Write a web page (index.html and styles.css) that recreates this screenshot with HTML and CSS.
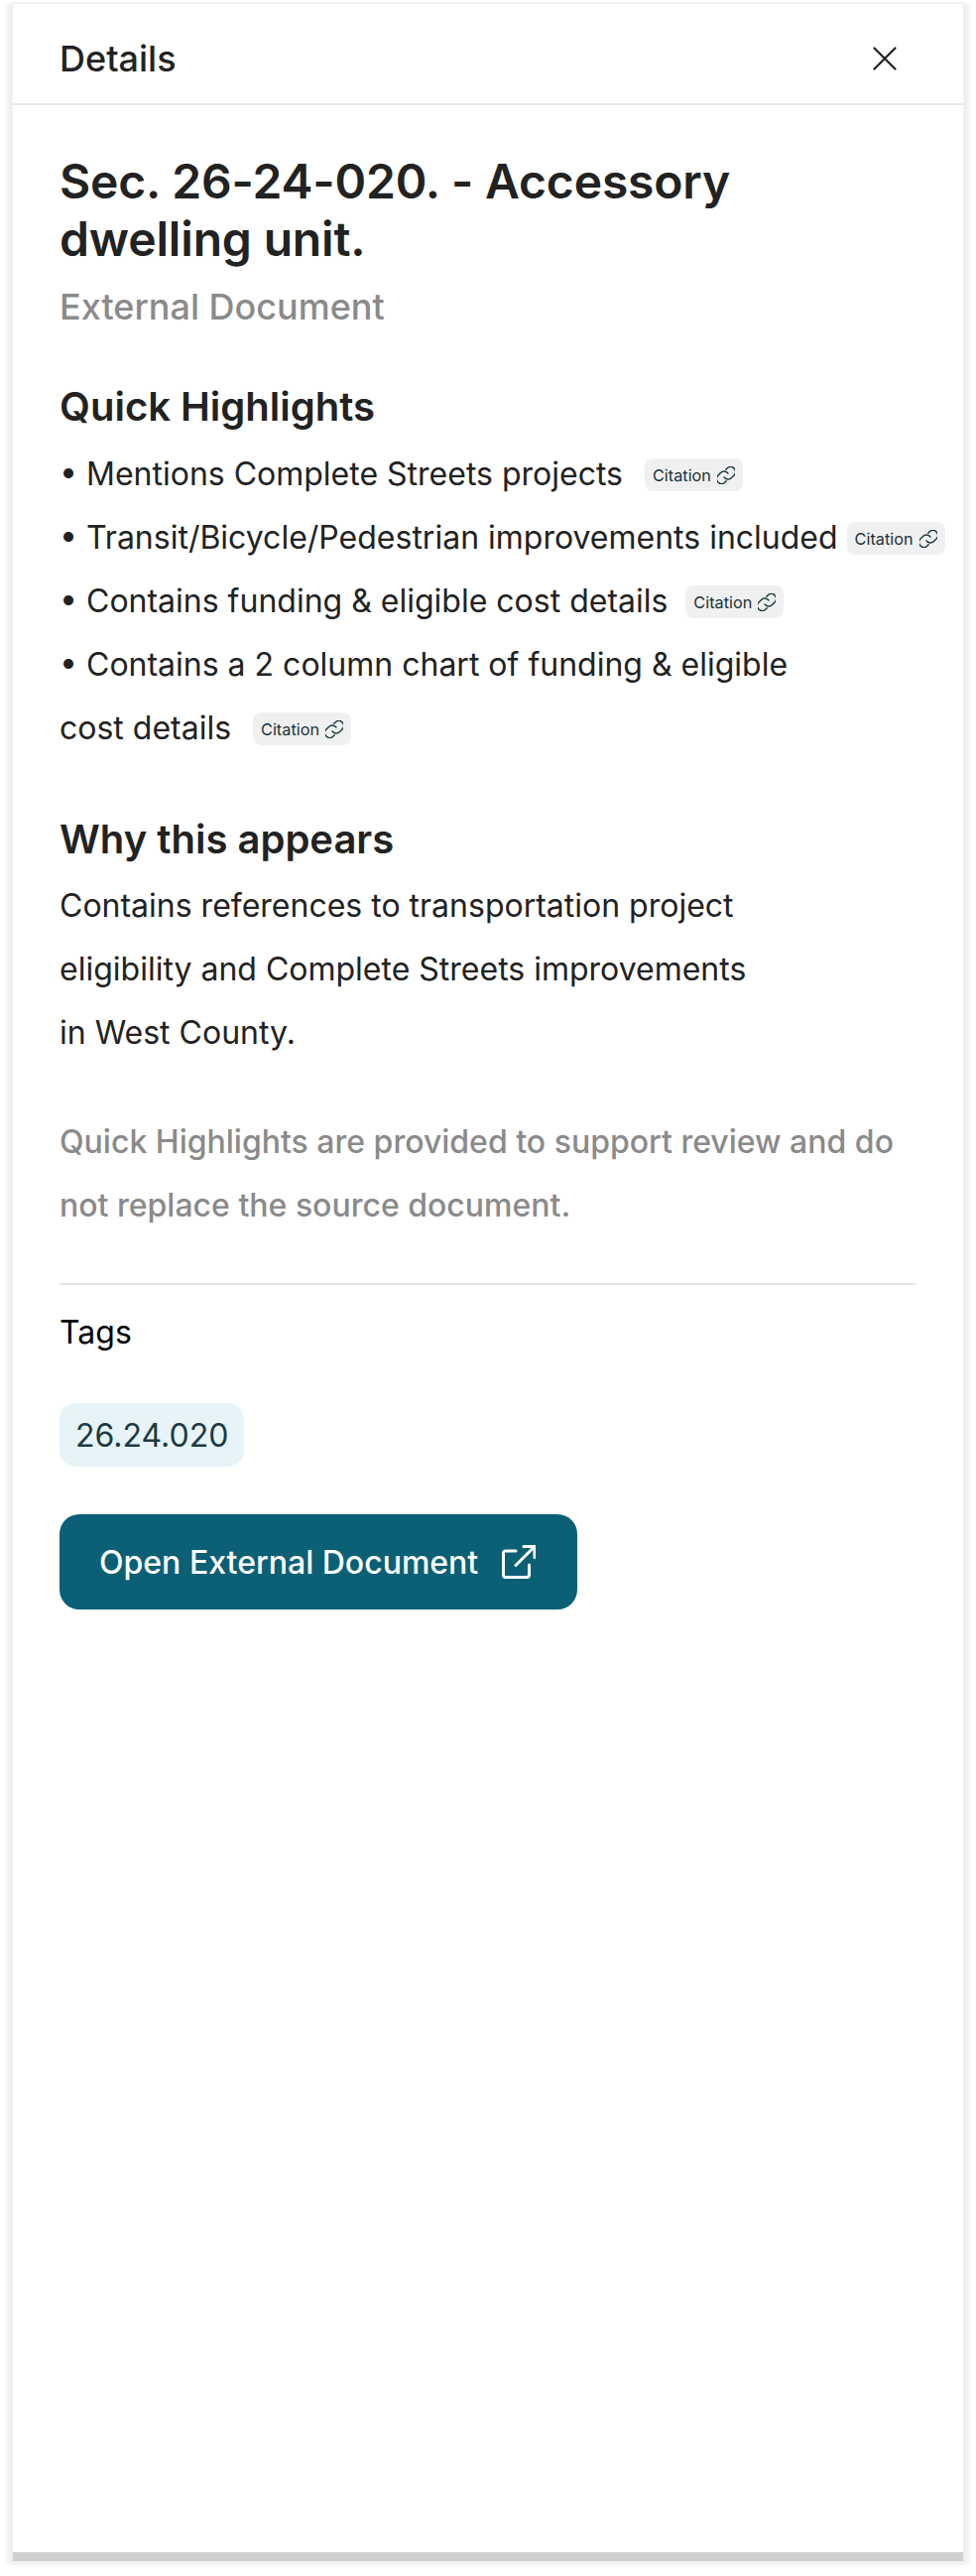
FILE: index.html
```html
<!DOCTYPE html>
<html lang="en">
<head>
<meta charset="utf-8">
<title>Details</title>
<link rel="stylesheet" href="styles.css">
</head>
<body>
<aside class="panel">
  <header class="panel-head">
    <span class="panel-title">Details</span>
    <svg class="close" viewBox="0 0 24 24" width="24" height="24" fill="none" stroke="#1f1f1f" stroke-width="2.2" stroke-linecap="round"><path d="M1.5 1.5 22.5 22.5M22.5 1.5 1.5 22.5"/></svg>
  </header>
  <div class="panel-body">
    <h1 class="doc-title">Sec. 26-24-020. - Accessory<br>dwelling unit.</h1>
    <p class="doc-type">External Document</p>

    <h2 class="section-title highlights">Quick Highlights</h2>
    <ul class="lines">
      <li>• Mentions Complete Streets projects<a class="cite cite-far"><span>Citation</span><svg viewBox="3 3 18 18" width="18" height="18" fill="none" stroke="currentColor" stroke-width="1.4" stroke-linecap="round" stroke-linejoin="round"><path d="M10 14a5 5 0 0 0 7.500.5l3-3a5 5 0 0 0-7-7l-1.700 1.700"/><path d="M14 10a5 5 0 0 0-7.500-.5l-3 3a5 5 0 0 0 7 7l1.700-1.700"/></svg></a></li>
      <li>• Transit/Bicycle/Pedestrian improvements included<a class="cite"><span>Citation</span><svg viewBox="3 3 18 18" width="18" height="18" fill="none" stroke="currentColor" stroke-width="1.4" stroke-linecap="round" stroke-linejoin="round"><path d="M10 14a5 5 0 0 0 7.500.5l3-3a5 5 0 0 0-7-7l-1.700 1.700"/><path d="M14 10a5 5 0 0 0-7.500-.5l-3 3a5 5 0 0 0 7 7l1.700-1.700"/></svg></a></li>
      <li>• Contains funding &amp; eligible cost details<a class="cite cite-mid"><span>Citation</span><svg viewBox="3 3 18 18" width="18" height="18" fill="none" stroke="currentColor" stroke-width="1.4" stroke-linecap="round" stroke-linejoin="round"><path d="M10 14a5 5 0 0 0 7.500.5l3-3a5 5 0 0 0-7-7l-1.700 1.700"/><path d="M14 10a5 5 0 0 0-7.500-.5l-3 3a5 5 0 0 0 7 7l1.700-1.700"/></svg></a></li>
      <li>• Contains a 2 column chart of funding &amp; eligible</li>
      <li>cost details<a class="cite cite-far"><span>Citation</span><svg viewBox="3 3 18 18" width="18" height="18" fill="none" stroke="currentColor" stroke-width="1.4" stroke-linecap="round" stroke-linejoin="round"><path d="M10 14a5 5 0 0 0 7.500.5l3-3a5 5 0 0 0-7-7l-1.700 1.700"/><path d="M14 10a5 5 0 0 0-7.500-.5l-3 3a5 5 0 0 0 7 7l1.700-1.700"/></svg></a></li>
    </ul>

    <h2 class="section-title why">Why this appears</h2>
    <p class="para">Contains references to transportation project<br>eligibility and Complete Streets improvements<br>in West County.</p>

    <p class="para note">Quick Highlights are provided to support review and do<br>not replace the source document.</p>

    <hr class="rule">
    <h3 class="tags-label">Tags</h3>
    <div class="tags"><span class="tag">26.24.020</span></div>
    <a class="open-btn"><span>Open External Document</span>
      <svg viewBox="0 0 34 34" width="34" height="34" fill="none" stroke="#fff" stroke-width="3" stroke-linecap="round" stroke-linejoin="round"><path d="M14 6H4a2.500 2.500 0 0 0-2.500 2.500V30a2.500 2.500 0 0 0 2.500 2.500H25A2.500 2.500 0 0 0 27.500 30V20"/><path d="M22 1.500H33V12.500M33 1.500 14 20.500"/></svg>
    </a>
  </div>
</aside>
</body>
</html>
```
FILE: styles.css
```css
* { box-sizing: border-box; }
html, body { margin: 0; padding: 0; background: #fff; }
body {
  width: 984px;
  height: 2596px;
  padding: 4px 13px 24px 13px;
  font-family: Inter, "Liberation Sans", sans-serif;
  color: #222222;
  overflow: hidden;
}
.panel {
  height: 2568px;
  background: #fff;
  box-shadow: 0 9px 0 0 #d0d0d0, 0 7px 4px 6px #eeeeee, 0 0 0 2px #f2f2f2;
}
.panel-head {
  height: 102px;
  border-bottom: 2px solid #e6e6e6;
  display: flex;
  align-items: center;
  justify-content: space-between;
  padding: 10px 67px 0 47px;
}
.panel-title { font-size: 36px; line-height: 58px; font-weight: 450; }
.close { display: block; }
.panel-body { padding: 48px 47px 0; }
.doc-title {
  margin: 0;
  font-size: 48px;
  line-height: 58px;
  font-weight: 600;
  letter-spacing: -0.16px;
}
.doc-type {
  margin: 10px 0 0;
  font-size: 36px;
  line-height: 58px;
  font-weight: 450;
  color: #8a8a8a;
}
.section-title {
  margin: 0;
  font-size: 40px;
  line-height: 58px;
  font-weight: 600;
}
.highlights { margin-top: 43px; }
.why { margin-top: 52px; }
.lines { list-style: none; margin: 6px 0 0; padding: 0; }
.lines li {
  display: flex;
  align-items: center;
  height: 64px;
  font-size: 32px;
  white-space: nowrap;
}
.cite {
  display: inline-flex;
  flex: none;
  align-items: center;
  justify-content: space-between;
  height: 33px;
  width: 99px;
  margin: 3px 0 0 9px;
  padding: 0 8px;
  border-radius: 8px;
  background: #f0f0f0;
  color: #17333b;
  font-size: 16.25px;
}
.cite-far { margin-left: 22px; }
.cite-mid { margin-left: 18px; }
.cite svg { display: block; flex: none; }
.para {
  margin: 6px 0 0;
  font-size: 32px;
  line-height: 64px;
}
.note { margin-top: 46px; font-weight: 450; color: #8a8a8a; }
.rule {
  margin: 46px 0 0;
  width: 863px;
  height: 2px;
  border: 0;
  background: #e6e6e6;
}
.tags-label {
  margin: 19px 0 0;
  font-size: 32px;
  line-height: 58px;
  font-weight: 400;
  color: #000;
}
.tags { display: flex; margin-top: 42px; }
.tag {
  display: flex;
  align-items: center;
  height: 64px;
  padding: 0 16px;
  border-radius: 16px;
  background: #e6f4f8;
  color: #1d3a43;
  font-size: 32px;
}
.open-btn {
  display: inline-flex;
  align-items: center;
  gap: 24px;
  width: 522px;
  height: 96px;
  margin-top: 48px;
  padding: 0 40px;
  border-radius: 20px;
  background: #0b6075;
  color: #fff;
  font-size: 32px;
  font-weight: 450;
}
.open-btn svg { display: block; flex: none; }
```
